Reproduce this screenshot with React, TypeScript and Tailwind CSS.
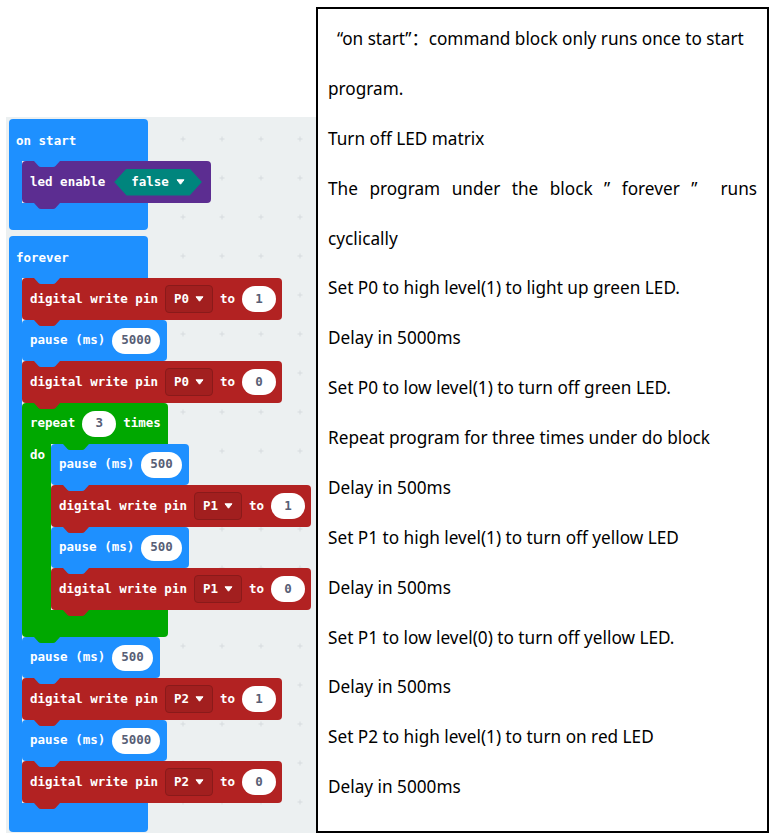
import React from 'react';

const mono = "font-['DejaVu_Sans_Mono',monospace] font-bold text-[12.5px]";

// colours per block category
const RED = { bg: 'bg-[#b22222]', hex: '#b22222' };
const BLUE = { bg: 'bg-[#1e90ff]', hex: '#1e90ff' };
const GREEN = { bg: 'bg-[#00a800]', hex: '#00a800' };
const PURPLE = { bg: 'bg-[#5c2d91]', hex: '#5c2d91' };

type Tone = { bg: string; hex: string };

const Tab = ({ fill, className = '' }: { fill: string; className?: string }) => (
  <svg width="26" height="6" viewBox="0 0 26 6" className={`absolute left-[12px] z-10 ${className}`}>
    <path d="M0 0 L4.5 5 Q5.4 6 7 6 H19 Q20.6 6 21.5 5 L26 0 Z" fill={fill} />
  </svg>
);

const Arrow = () => (
  <svg width="9" height="6" viewBox="0 0 9 6">
    <path d="M1 0.8 H8 L4.5 5.2 Z" fill="white" stroke="white" strokeWidth="1" strokeLinejoin="round" />
  </svg>
);

const Label = ({ children }: { children: React.ReactNode }) => <span className="text-white whitespace-pre">{children}</span>;

const Oval = ({ children }: { children: React.ReactNode }) => (
  <span className="h-[26px] min-w-[34px] px-[9px] rounded-full bg-white flex items-center justify-center text-[#575e75]">{children}</span>
);

const Pin = ({ children }: { children: React.ReactNode }) => (
  <span className="h-[28px] px-[8px] rounded-[4px] bg-[#a21f1f] border border-[#8a1a1a] flex items-center gap-[6px] text-white">
    {children}
    <Arrow />
  </span>
);

function Stmt({ tone, h, notch, children, gap = 'gap-[7px]', pr = 'pr-[7px]' }: { tone: Tone; h: string; notch?: string; children: React.ReactNode; gap?: string; pr?: string }) {
  return (
    <div className={`relative flex items-center pl-2 ${pr} ${gap} rounded-[4px] ${tone.bg} ${h}`}>
      {notch && <Tab fill={notch} className="top-0" />}
      {children}
      <Tab fill={tone.hex} className="top-full" />
    </div>
  );
}

const DigitalWrite = ({ pin, value, notch }: { pin: string; value: string; notch?: string }) => (
  <Stmt tone={RED} h="h-[42px]" notch={notch} pr="pr-[6px]">
    <Label>digital write pin</Label>
    <Pin>{pin}</Pin>
    <Label>to</Label>
    <Oval>{value}</Oval>
  </Stmt>
);

const Pause = ({ ms, notch }: { ms: string; notch?: string }) => (
  <Stmt tone={BLUE} h="h-[41px]" notch={notch}>
    <Label>pause (ms)</Label>
    <Oval>{ms}</Oval>
  </Stmt>
);

function Hat({ label, foot, children }: { label: string; foot: string; children: React.ReactNode }) {
  return (
    <div className="relative flex flex-col items-start">
      <div className="flex items-center w-[139px] h-[42px] pl-[7px] pt-[2px] rounded-t-[4px] bg-[#1e90ff]">
        <Label>{label}</Label>
      </div>
      <div className="flex">
        <div className="w-[13px] bg-[#1e90ff]" />
        <div className="flex flex-col items-start">{children}</div>
      </div>
      <div className={`w-[139px] ${foot} rounded-b-[4px] bg-[#1e90ff]`} />
    </div>
  );
}

function Repeat({ times, children }: { times: string; children: React.ReactNode }) {
  return (
    <div className="relative flex flex-col items-start">
      <div className="flex items-center gap-[7px] w-[146px] h-[41px] pl-2 rounded-t-[4px] bg-[#00a800]">
        <Label>repeat</Label>
        <Oval>{times}</Oval>
        <Label>times</Label>
      </div>
      <div className="flex">
        <div className="w-[29px] pl-2 pt-[3px] leading-4 bg-[#00a800]">
          <Label>do</Label>
        </div>
        <div className="flex flex-col items-start">{children}</div>
      </div>
      <div className="w-[146px] h-[27px] rounded-b-[4px] bg-[#00a800]" />
      <Tab fill={GREEN.hex} className="top-full" />
    </div>
  );
}

const Grid = () => (
  <svg className="absolute inset-0" width="310" height="716">
    <defs>
      <pattern id="dots" width="39" height="39" x="1.5" y="2.5" patternUnits="userSpaceOnUse">
        <path d="M17 19.5 H22 M19.5 17 V22" stroke="#d6dbde" strokeWidth="1" />
      </pattern>
    </defs>
    <rect width="310" height="716" fill="url(#dots)" />
  </svg>
);

const lines = [
  'Set P0 to high level(1) to light up green LED.',
  'Delay in 5000ms',
  'Set P0 to low level(1) to turn off green LED.',
  'Repeat program for three times under do block',
  'Delay in 500ms',
  'Set P1 to high level(1) to turn off yellow LED',
  'Delay in 500ms',
  'Set P1 to low level(0) to turn off yellow LED.',
  'Delay in 500ms',
  'Set P2 to high level(1) to turn on red LED',
  'Delay in 5000ms',
];

export default function App() {
  return (
    <div className="w-[777px] h-[840px] bg-white flex items-start">
      <div className={`relative ml-[6px] mt-[117px] w-[310px] h-[716px] bg-[#ecf0f1] pl-[3px] pt-[2px] ${mono}`}>
        <Grid />
        <div className="relative flex flex-col items-start gap-[6px]">
          <Hat label="on start" foot="h-[27px]">
            <Stmt tone={PURPLE} h="h-[42px]" notch={BLUE.hex} gap="gap-[9px]" pr="pr-[9px]">
              <Label>led enable</Label>
              <span className="h-[27px] px-[17px] flex items-center gap-[7px] bg-[#00857d] [clip-path:polygon(14%_0,86%_0,100%_50%,86%_100%,14%_100%,0_50%)]">
                <Label>false</Label>
                <Arrow />
              </span>
            </Stmt>
          </Hat>
          <Hat label="forever" foot="h-[29px]">
            <DigitalWrite pin="P0" value="1" notch={BLUE.hex} />
            <Pause ms="5000" />
            <DigitalWrite pin="P0" value="0" />
            <Repeat times="3">
              <Pause ms="500" notch={GREEN.hex} />
              <DigitalWrite pin="P1" value="1" />
              <Pause ms="500" />
              <DigitalWrite pin="P1" value="0" />
            </Repeat>
            <Pause ms="500" />
            <DigitalWrite pin="P2" value="1" />
            <Pause ms="5000" />
            <DigitalWrite pin="P2" value="0" />
          </Hat>
        </div>
      </div>

      <div className="mt-[7px] w-[453px] h-[826px] border-2 border-black pl-[10px] pr-[10px] pt-[5px] font-['Noto_Sans','Noto_Sans_CJK_SC',sans-serif] text-[17.2px] leading-[49.87px] text-black">
        <div className="pl-[9px] whitespace-nowrap">“on start”：command block only runs once to start</div>
        <div>program.</div>
        <div>Turn off LED matrix</div>
        <div className="text-justify [text-align-last:justify] whitespace-pre">The program under the block ” forever ”  runs</div>
        <div>cyclically</div>
        {lines.map((t, i) => (
          <div key={i}>{t}</div>
        ))}
      </div>
    </div>
  );
}
